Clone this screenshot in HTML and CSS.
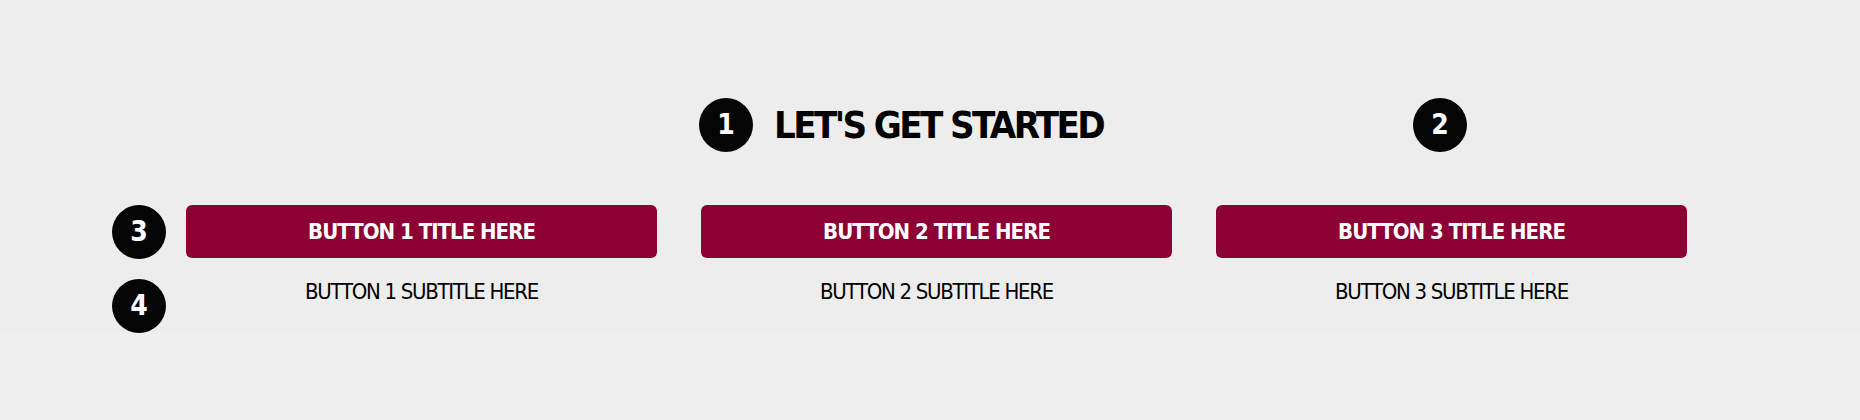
FILE: index.html
```html
<!DOCTYPE html>
<html lang="en">
<head>
<meta charset="utf-8">
<title>Let's get started</title>
<link rel="stylesheet" href="styles.css">
</head>
<body>
<section class="panel">
  <div class="row row-head">
    <div class="slot"></div>
    <div class="cols">
      <div class="col"></div>
      <div class="col head-main">
        <span class="marker">1</span>
        <h1 class="title">LET'S GET STARTED</h1>
      </div>
      <div class="col head-side">
        <span class="marker">2</span>
      </div>
    </div>
  </div>

  <div class="row row-buttons">
    <div class="slot"><span class="marker">3</span></div>
    <div class="cols">
      <button class="col btn" type="button">BUTTON 1 TITLE HERE</button>
      <button class="col btn" type="button">BUTTON 2 TITLE HERE</button>
      <button class="col btn" type="button">BUTTON 3 TITLE HERE</button>
    </div>
  </div>

  <div class="row row-subs">
    <div class="slot"><span class="marker">4</span></div>
    <div class="cols">
      <p class="col subtitle">BUTTON 1 SUBTITLE HERE</p>
      <p class="col subtitle">BUTTON 2 SUBTITLE HERE</p>
      <p class="col subtitle">BUTTON 3 SUBTITLE HERE</p>
    </div>
  </div>
</section>
</body>
</html>
```

FILE: styles.css
```css
html, body {
  margin: 0;
  padding: 0;
}

body {
  background: #efefef;
  font-family: "DejaVu Sans", "Liberation Sans", sans-serif;
  font-stretch: condensed;
  color: #000;
}

.panel {
  background: #ededed;
  height: 333px;
  box-sizing: border-box;
  padding: 98px 0 0 112px;
}

.row {
  display: flex;
  align-items: flex-start;
}

.slot {
  width: 54px;
  margin-right: 20px;
  flex: none;
}

.cols {
  display: flex;
  gap: 44px;
}

.col {
  width: 471px;
  flex: none;
  box-sizing: border-box;
}

.row-head {
  height: 54px;
}

.head-main {
  display: flex;
  align-items: center;
  gap: 21px;
  margin-left: -2px;
  margin-right: 2px;
}

.head-side {
  display: flex;
  align-items: center;
  padding-left: 197px;
}

.marker {
  width: 54px;
  height: 54px;
  border-radius: 50%;
  background: #050505;
  color: #fff;
  font-weight: 700;
  font-size: 28px;
  display: flex;
  align-items: center;
  justify-content: center;
  flex: none;
  line-height: 1;
}

.title {
  margin: 0;
  font-size: 38px;
  font-weight: 700;
  letter-spacing: -2.6px;
  line-height: 1;
  white-space: nowrap;
}

.row-buttons {
  margin-top: 53px;
}

.btn {
  height: 53px;
  border: 0;
  border-radius: 6px;
  background: #8c0033;
  color: #fff;
  font-family: inherit;
  font-stretch: condensed;
  font-weight: 700;
  font-size: 22px;
  letter-spacing: -1px;
  padding: 0;
  margin: 0;
}

.row-subs {
  margin-top: 20px;
}

.subtitle {
  margin: -1px 0 0;
  text-align: center;
  font-size: 22px;
  font-weight: 400;
  line-height: 28px;
  letter-spacing: -1.3px;
}
```
